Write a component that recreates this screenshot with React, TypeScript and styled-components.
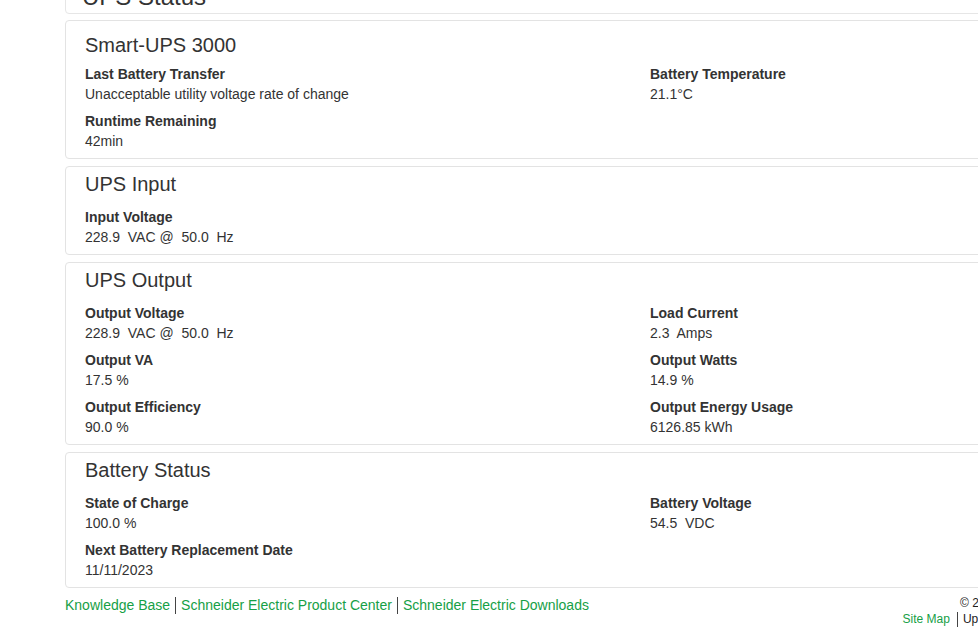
import styled, { createGlobalStyle } from "styled-components";

const GlobalStyle = createGlobalStyle`
  body {
    margin: 0;
    overflow: hidden;
    background: #fff;
    font-family: "Liberation Sans", Arial, sans-serif;
    color: #333;
  }
`;

const Page = styled.div`
  margin-top: -21px;
  padding-left: 65px;
  width: 1170px;
`;

const StatusBox = styled.div`
  border: 1px solid #e6e6e6;
  border-radius: 4px;
  padding: 4px 16px 3px;
  margin-bottom: 6px;
`;

const PageTitle = styled.h2`
  margin: 0;
  font-size: 24px;
  line-height: 26px;
  font-weight: normal;
  color: #333;
`;

const Panel = styled.section<{ $lead?: boolean }>`
  border: 1px solid #e3e3e3;
  border-radius: 4px;
  padding: ${({ $lead }) => ($lead ? "13px" : "6px")} 19px 0;
  margin-bottom: 7px;
`;

const PanelTitle = styled.h3<{ $lead?: boolean }>`
  margin: 0 0 ${({ $lead }) => ($lead ? "8px" : "12px")};
  font-size: 20px;
  line-height: 22px;
  font-weight: normal;
  color: #333;
`;

const FieldGrid = styled.div`
  display: grid;
  grid-template-columns: 565px 1fr;
`;

const Field = styled.div`
  margin-bottom: 7px;
  font-size: 14px;
  line-height: 20px;
`;

const Label = styled.div`
  font-weight: bold;
`;

const Value = styled.div`
  white-space: pre;
`;

const Footer = styled.footer`
  display: flex;
  justify-content: space-between;
  align-items: flex-start;
  font-size: 14px;
  line-height: 20px;
`;

const LinkRow = styled.div`
  display: flex;
  align-items: center;
`;

const FooterLink = styled.a<{ $small?: boolean }>`
  color: #16a046;
  text-decoration: none;
  font-size: ${({ $small }) => ($small ? "12px" : "14px")};
`;

const Divider = styled.span<{ $small?: boolean }>`
  display: inline-block;
  width: 1px;
  height: ${({ $small }) => ($small ? "15px" : "17px")};
  background: #444;
  margin: ${({ $small }) => ($small ? "0 5px 0 7px" : "0 5px")};
`;

const Legal = styled.div`
  display: flex;
  flex-direction: column;
  align-items: flex-end;
  font-size: 12px;
  line-height: 16px;
  color: #222;
  margin-right: 122px;
`;

const LegalLinks = styled.div`
  display: flex;
  align-items: center;
`;

const Plain = styled.span`
  color: #222;
`;

type Item = { label: string; value: string };

const sections: { title: string; items: Item[] }[] = [
  {
    title: "Smart-UPS 3000",
    items: [
      { label: "Last Battery Transfer", value: "Unacceptable utility voltage rate of change" },
      { label: "Battery Temperature", value: "21.1°C" },
      { label: "Runtime Remaining", value: "42min" },
    ],
  },
  {
    title: "UPS Input",
    items: [{ label: "Input Voltage", value: "228.9  VAC @  50.0  Hz" }],
  },
  {
    title: "UPS Output",
    items: [
      { label: "Output Voltage", value: "228.9  VAC @  50.0  Hz" },
      { label: "Load Current", value: "2.3  Amps" },
      { label: "Output VA", value: "17.5 %" },
      { label: "Output Watts", value: "14.9 %" },
      { label: "Output Efficiency", value: "90.0 %" },
      { label: "Output Energy Usage", value: "6126.85 kWh" },
    ],
  },
  {
    title: "Battery Status",
    items: [
      { label: "State of Charge", value: "100.0 %" },
      { label: "Battery Voltage", value: "54.5  VDC" },
      { label: "Next Battery Replacement Date", value: "11/11/2023" },
    ],
  },
];

export default function App() {
  return (
    <>
      <GlobalStyle />
      <Page>
        <StatusBox>
          <PageTitle>UPS Status</PageTitle>
        </StatusBox>

        {sections.map((s, i) => (
          <Panel key={s.title} $lead={i === 0}>
            <PanelTitle $lead={i === 0}>{s.title}</PanelTitle>
            <FieldGrid>
              {s.items.map((it) => (
                <Field key={it.label}>
                  <Label>{it.label}</Label>
                  <Value>{it.value}</Value>
                </Field>
              ))}
            </FieldGrid>
          </Panel>
        ))}

        <Footer>
          <LinkRow>
            <FooterLink href="#">Knowledge Base</FooterLink>
            <Divider />
            <FooterLink href="#">Schneider Electric Product Center</FooterLink>
            <Divider />
            <FooterLink href="#">Schneider Electric Downloads</FooterLink>
          </LinkRow>
          <Legal>
            <span>© 2023 Schneider Electric IT</span>
            <LegalLinks>
              <FooterLink href="#" $small>
                Site Map
              </FooterLink>
              <Divider $small />
              <Plain>Updates and Release Notes</Plain>
            </LegalLinks>
          </Legal>
        </Footer>
      </Page>
    </>
  );
}
